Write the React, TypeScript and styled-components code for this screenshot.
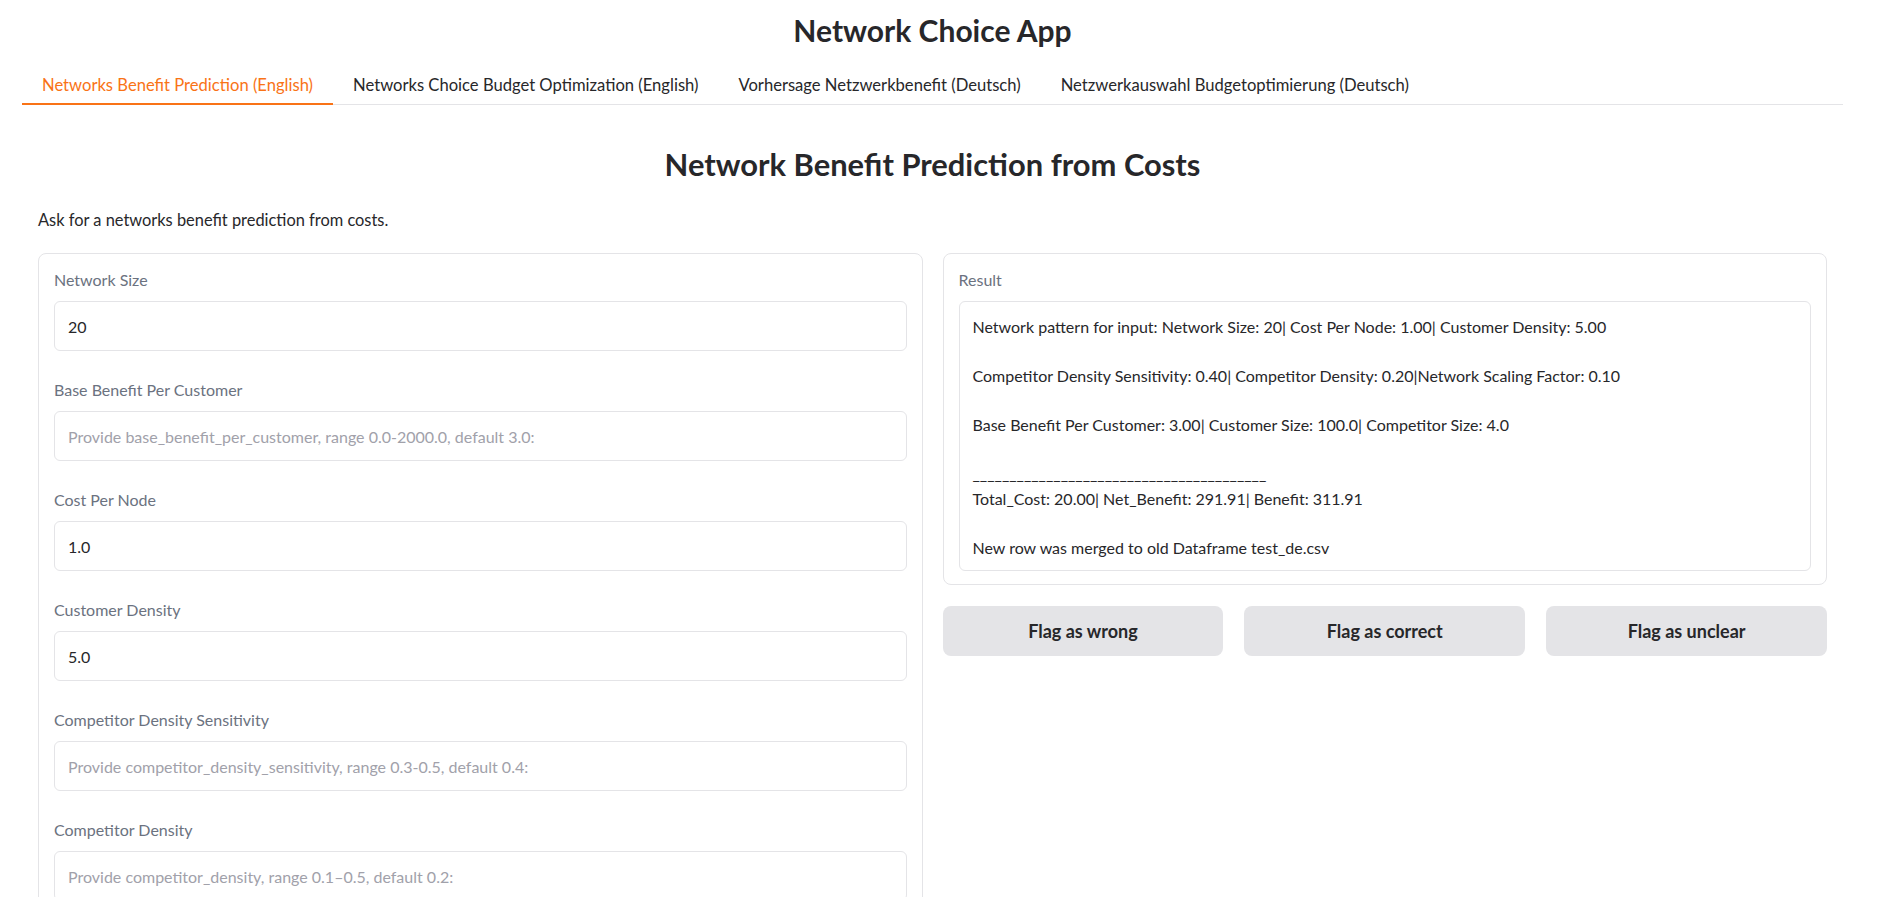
import React from "react";
import styled, { createGlobalStyle } from "styled-components";

const GlobalStyle = createGlobalStyle`
  html, body {
    margin: 0;
    padding: 0;
    background: #ffffff;
    height: 100%;
    overflow: hidden;
  }
  body {
    font-family: Lato, "Noto Sans", sans-serif;
    color: #27272a;
  }
  * {
    box-sizing: border-box;
  }
`;

interface FieldSpec {
  label: string;
  value?: string;
  placeholder?: string;
}

const fields: FieldSpec[] = [
  { label: "Network Size", value: "20" },
  {
    label: "Base Benefit Per Customer",
    placeholder: "Provide base_benefit_per_customer, range 0.0-2000.0, default 3.0:",
  },
  { label: "Cost Per Node", value: "1.0" },
  { label: "Customer Density", value: "5.0" },
  {
    label: "Competitor Density Sensitivity",
    placeholder: "Provide competitor_density_sensitivity, range 0.3-0.5, default 0.4:",
  },
  {
    label: "Competitor Density",
    placeholder: "Provide competitor_density, range 0.1\u20130.5, default 0.2:",
  },
  {
    label: "Network Scaling Factor",
    placeholder: "Provide network_scaling_factor, range 0.05-0.2, default 0.1:",
  },
  {
    label: "Customer Size",
    placeholder: "Provide customer_size, range 10.0-1000.0, default 100.0:",
  },
  {
    label: "Competitor Size",
    placeholder: "Provide competitor_size, range 1.0-10.0, default 4.0:",
  },
];

const tabs = [
  "Networks Benefit Prediction (English)",
  "Networks Choice Budget Optimization (English)",
  "Vorhersage Netzwerkbenefit (Deutsch)",
  "Netzwerkauswahl Budgetoptimierung (Deutsch)",
];

const resultText = [
  "Network pattern for input: Network Size: 20| Cost Per Node: 1.00| Customer Density: 5.00",
  "",
  "Competitor Density Sensitivity: 0.40| Competitor Density: 0.20|Network Scaling Factor: 0.10",
  "",
  "Base Benefit Per Customer: 3.00| Customer Size: 100.0| Competitor Size: 4.0",
  "",
  "________________________________________",
  "Total_Cost: 20.00| Net_Benefit: 291.91| Benefit: 311.91",
  "",
  "New row was merged to old Dataframe test_de.csv",
].join("\n");

const App: React.FC = () => {
  return (
    <>
      <GlobalStyle />
      <Viewport>
        <Page>
          <AppTitle>Network Choice App</AppTitle>
          <TabBar>
            {tabs.map((t, i) => (
              <TabButton key={t} $active={i === 0}>
                {t}
              </TabButton>
            ))}
          </TabBar>
          <TabPanel>
            <SectionTitle>Network Benefit Prediction from Costs</SectionTitle>
            <Intro>Ask for a networks benefit prediction from costs.</Intro>
            <Columns>
              <Column>
                <Panel>
                  {fields.map((f) => (
                    <Field key={f.label}>
                      <FieldLabel>{f.label}</FieldLabel>
                      <TextInput defaultValue={f.value} placeholder={f.placeholder} />
                    </Field>
                  ))}
                </Panel>
                <ButtonRow>
                  <ActionButton>Clear</ActionButton>
                  <ActionButton $primary>Submit</ActionButton>
                </ButtonRow>
              </Column>
              <Column>
                <Panel>
                  <Field>
                    <FieldLabel>Result</FieldLabel>
                    <ResultBox>{resultText}</ResultBox>
                  </Field>
                </Panel>
                <ButtonRow>
                  <ActionButton>Flag as wrong</ActionButton>
                  <ActionButton>Flag as correct</ActionButton>
                  <ActionButton>Flag as unclear</ActionButton>
                </ButtonRow>
              </Column>
            </Columns>
          </TabPanel>
          <Footer>Use via API · Built with Gradio · Settings</Footer>
        </Page>
      </Viewport>
    </>
  );
};

const Viewport = styled.div`
  height: 100vh;
  overflow-y: scroll;

  &::-webkit-scrollbar {
    width: 17px;
  }
  &::-webkit-scrollbar-track {
    background: #fafafa;
    border-left: 1px solid #f0f0f0;
  }
  &::-webkit-scrollbar-thumb {
    background: #8a8a8a;
    border-radius: 8px;
    border: 3px solid #fafafa;
    border-left-width: 4px;
    border-right-width: 2px;
  }
  &::-webkit-scrollbar-button:single-button {
    display: block;
    height: 12px;
    background: #fafafa;
  }
`;

const Page = styled.div`
  width: 1843px;
  min-height: 1851px;
  padding: 12px 0 0 22px;
  display: flex;
  flex-direction: column;
`;

const AppTitle = styled.h1`
  margin: 0;
  text-align: center;
  font-size: 30px;
  line-height: 36px;
  font-weight: 700;
  color: #27272a;
`;

const TabBar = styled.div`
  margin-top: 18px;
  display: flex;
  border-bottom: 1px solid #e4e4e7;
`;

const TabButton = styled.button<{ $active?: boolean }>`
  border: none;
  background: none;
  font-family: inherit;
  font-size: 16.6px;
  height: 39px;
  padding: 0 20px;
  margin-bottom: -1px;
  cursor: pointer;
  color: ${({ $active }) => ($active ? "#f97316" : "#27272a")};
  border-bottom: 2px solid ${({ $active }) => ($active ? "#f97316" : "transparent")};
`;

const TabPanel = styled.div`
  padding: 42px 16px 0;
  display: flex;
  flex-direction: column;
`;

const SectionTitle = styled.h2`
  margin: 0;
  text-align: center;
  font-size: 30.9px;
  line-height: 36px;
  font-weight: 700;
  color: #27272a;
`;

const Intro = styled.p`
  margin: 25px 0 0;
  font-size: 16.4px;
  line-height: 24px;
`;

const Columns = styled.div`
  margin-top: 21px;
  display: grid;
  grid-template-columns: 1fr 1fr;
  gap: 20px;
  align-items: start;
`;

const Column = styled.div`
  display: flex;
  flex-direction: column;
  gap: 21px;
  min-width: 0;
`;

const Panel = styled.div`
  border: 1px solid #e4e4e7;
  border-radius: 8px;
  padding: 16px 15px 13px;
  display: flex;
  flex-direction: column;
  gap: 29px;
  background: #ffffff;
`;

const Field = styled.label`
  display: flex;
  flex-direction: column;
  gap: 11px;
`;

const FieldLabel = styled.span`
  font-size: 16px;
  line-height: 20px;
  color: #6b7280;
`;

const TextInput = styled.input`
  height: 50px;
  width: 100%;
  border: 1px solid #e4e4e7;
  border-radius: 6px;
  padding: 0 13px;
  font-family: inherit;
  font-size: 16px;
  color: #27272a;
  outline: none;

  &::placeholder {
    color: #a1a1aa;
  }
`;

const ResultBox = styled.div`
  border: 1px solid #e4e4e7;
  border-radius: 6px;
  padding: 13px 13px 10px;
  font-size: 16px;
  line-height: 24.5px;
  white-space: pre-wrap;
  color: #27272a;
`;

const ButtonRow = styled.div`
  display: flex;
  gap: 21px;
`;

const ActionButton = styled.button<{ $primary?: boolean }>`
  flex: 1;
  height: 50px;
  border: none;
  border-radius: 8px;
  font-family: inherit;
  font-size: 18px;
  font-weight: 700;
  cursor: pointer;
  background: ${({ $primary }) => ($primary ? "#f97316" : "#e4e4e7")};
  color: ${({ $primary }) => ($primary ? "#ffffff" : "#27272a")};
`;

const Footer = styled.div`
  margin-top: 120px;
  text-align: center;
  font-size: 14px;
  color: #71717a;
`;

export default App;
